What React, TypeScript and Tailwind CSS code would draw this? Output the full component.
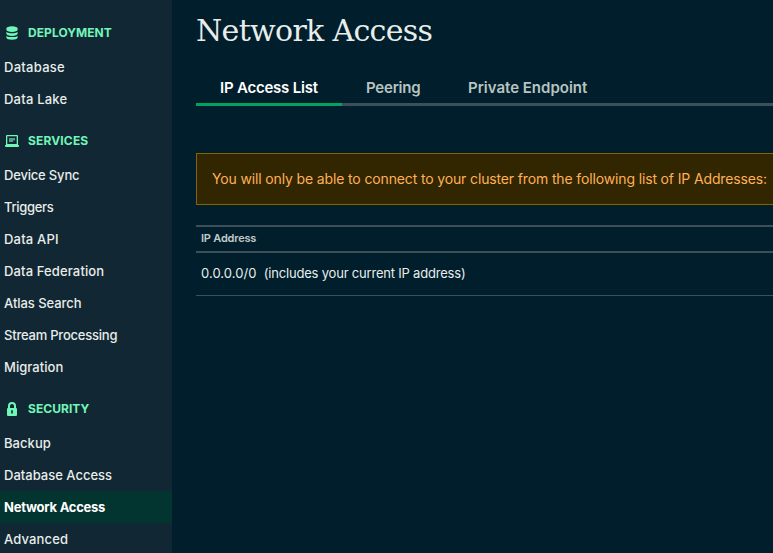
import type { ReactNode } from 'react';

type Item = { label: string; tracking: string; active?: boolean };

const deployment: Item[] = [
  { label: 'Database', tracking: 'tracking-[0.27px]' },
  { label: 'Data Lake', tracking: 'tracking-[0.22px]' },
];

const services: Item[] = [
  { label: 'Device Sync', tracking: 'tracking-[-0.18px]' },
  { label: 'Triggers', tracking: 'tracking-[-0.33px]' },
  { label: 'Data API', tracking: 'tracking-[0.2px]' },
  { label: 'Data Federation', tracking: 'tracking-[0.13px]' },
  { label: 'Atlas Search', tracking: 'tracking-[-0.05px]' },
  { label: 'Stream Processing', tracking: 'tracking-[-0.22px]' },
  { label: 'Migration', tracking: 'tracking-[0.05px]' },
];

const security: Item[] = [
  { label: 'Backup', tracking: 'tracking-[0.05px]' },
  { label: 'Database Access', tracking: 'tracking-normal' },
  { label: 'Network Access', tracking: 'tracking-[-0.25px]', active: true },
  { label: 'Advanced', tracking: 'tracking-[0.15px]' },
];

const DatabaseIcon = () => (
  <svg width="16" height="16" viewBox="0 0 16 16" fill="currentColor">
    <path d="M8 1.300c3.200 0 5.600.9 5.600 2.300v1.200c0 1.300-2.400 2.200-5.600 2.200S2.400 6.100 2.400 4.800V3.600C2.400 2.200 4.800 1.300 8 1.300Z" />
    <path d="M2.400 6.900C3.600 7.800 5.600 8.200 8 8.200s4.400-.4 5.600-1.300v1.900c0 1.200-2.400 2.100-5.600 2.100s-5.600-.9-5.600-2.100Z" />
    <path d="M2.400 10.900c1.200.8 3.200 1.200 5.600 1.200s4.400-.4 5.600-1.200v1.500c0 1.300-2.400 2.300-5.600 2.300s-5.600-1-5.600-2.300Z" />
  </svg>
);

const LaptopIcon = () => (
  <svg width="16" height="16" viewBox="0 0 16 16" fill="currentColor">
    <path fillRule="evenodd" d="M2 3a1 1 0 0 1 1-1h10a1 1 0 0 1 1 1v9H2ZM3.300 3.300v7.700h9.400V3.300Z" />
    <path d="M1 12h14v1a1 1 0 0 1-1 1H2a1 1 0 0 1-1-1Z" />
    <path opacity=".6" d="M5 5h6v2.500H9V9H5Z" />
  </svg>
);

const LockIcon = () => (
  <svg width="16" height="16" viewBox="0 0 16 16" fill="currentColor">
    <path
      fillRule="evenodd"
      d="M4 7V5a4 4 0 0 1 8 0v2a1 1 0 0 1 1 1v6a1 1 0 0 1-1 1H4a1 1 0 0 1-1-1V8a1 1 0 0 1 1-1Zm2 0h4V5a2 2 0 0 0-4 0Zm1.200 2.600a1 1 0 0 1 1.600 0v2.800H7.200Z"
    />
  </svg>
);

function Section({ icon, title, tracking, items }: { icon: ReactNode; title: string; tracking: string; items: Item[] }) {
  return (
    <section className="mb-[9px]">
      <h2 className="mb-[3px] flex h-8 items-center gap-2 pl-1 pt-[2px] text-[12px] font-bold leading-5 text-[#71f6ba]">
        {icon}
        <span className={tracking}>{title}</span>
      </h2>
      <ul>
        {items.map((item) => (
          <li
            key={item.label}
            className={`flex h-8 items-center pl-1 text-[13px] leading-5 ${item.active ? 'bg-[#023430] font-bold text-white' : 'font-medium text-[#e8edeb]'}`}
          >
            <span className={item.tracking}>{item.label}</span>
          </li>
        ))}
      </ul>
    </section>
  );
}

export default function App() {
  return (
    <div className="flex h-[553px] w-[773px] overflow-hidden bg-[#001e2b] font-['Inter',sans-serif]">
      <nav className="w-[172px] shrink-0 bg-[#112733] pt-4">
        <Section icon={<DatabaseIcon />} title="DEPLOYMENT" tracking="tracking-[0.05px]" items={deployment} />
        <Section icon={<LaptopIcon />} title="SERVICES" tracking="tracking-[0.15px]" items={services} />
        <Section icon={<LockIcon />} title="SECURITY" tracking="tracking-[0.05px]" items={security} />
      </nav>
      <main className="min-w-0 flex-1 whitespace-nowrap pl-6">
        <h1 className="pt-[11px] font-['DejaVu_Serif',serif] text-[30px] leading-10 tracking-[-0.68px] text-[#e8edeb]">
          Network Access
        </h1>
        <div className="mt-[21px] flex h-[34px] border-b-[3px] border-[#3d4f58] text-[15px] font-semibold leading-[31px] text-[#b8c4c2]">
          <div className="h-[34px] w-[146px] border-b-[3px] border-[#00a35c] pl-6 tracking-[-0.22px] text-white">
            IP Access List
          </div>
          <div className="w-[102px] pl-6 tracking-[-0.2px]">Peering</div>
          <div className="pl-6">Private Endpoint</div>
        </div>
        <div className="mt-[47px] h-[52px] border border-r-0 border-[#866300] bg-[#312600] pl-[15px] text-[14px] leading-[50px] tracking-[-0.14px] text-[#ffb057]">
          You will only be able to connect to your cluster from the following list of IP Addresses:
        </div>
        <div className="mt-5 h-7 border-y-2 border-[#3d4f58] pl-[5px] text-[11px] font-semibold leading-[22px] tracking-[-0.2px] text-[#c1ccca]">
          IP Address
        </div>
        <div className="h-[43px] whitespace-pre border-b border-[#3d4f58] pl-[5px] text-[13px] leading-[40px] text-[#e8edeb]">
          <span className="tracking-[0.05px]">{'0.0.0.0/0  '}</span>
          <span className="tracking-[-0.2px]">(includes your current IP address)</span>
        </div>
      </main>
    </div>
  );
}
